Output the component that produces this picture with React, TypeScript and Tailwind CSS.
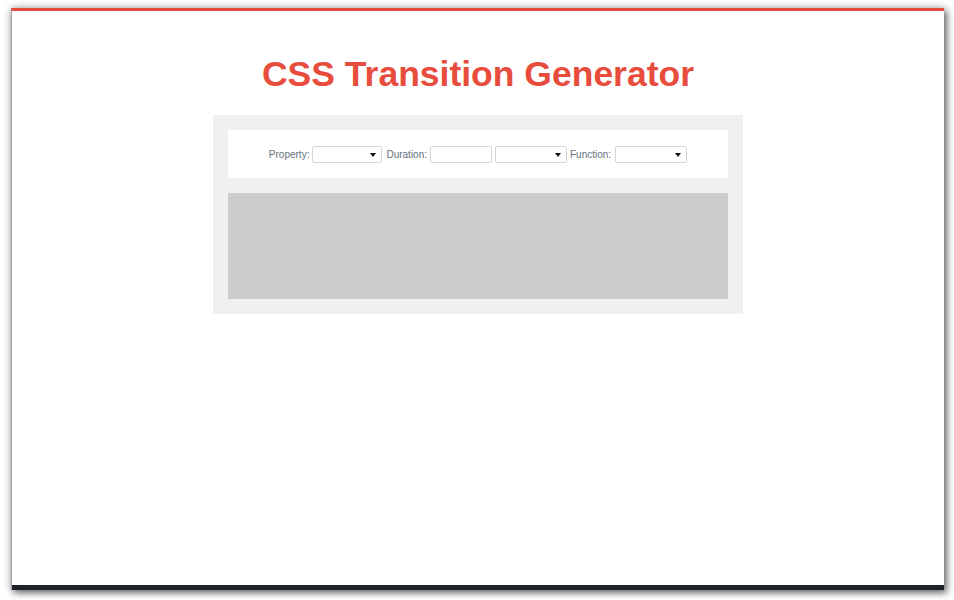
import { useState } from "react";

const labelClass = "translate-y-[1px] text-[10px] leading-none text-[#65717d]";

function Dropdown({ width, value, options, onChange }: { width: string; value: string; options: string[]; onChange: (v: string) => void }) {
  return (
    <div className={`relative h-[17px] ${width}`}>
      <select
        value={value}
        onChange={(e) => onChange(e.target.value)}
        className="block h-full w-full appearance-none rounded-[2px] border border-[#d6d6d6] bg-white px-1 text-[10px] leading-none text-[#333] outline-none"
      >
        {options.map((o) => (
          <option key={o} value={o}>
            {o}
          </option>
        ))}
      </select>
      <svg className="pointer-events-none absolute right-[6px] top-[7px]" width="6" height="4" viewBox="0 0 6 4">
        <path d="M0 0h6L3 4z" fill="#111" />
      </svg>
    </div>
  );
}

export default function App() {
  const [property, setProperty] = useState("");
  const [duration, setDuration] = useState("");
  const [unit, setUnit] = useState("");
  const [timing, setTiming] = useState("");

  return (
    <div className="min-h-[600px] bg-white pl-[11px] pt-[8px]" style={{ fontFamily: '"Liberation Sans", Arial, sans-serif' }}>
      <div className="flex h-[582px] w-[933px] flex-col border-l border-t-[3px] border-l-[#a0a0a0] border-t-[#e44b3b] bg-white shadow-[0_0_8px_rgba(0,0,0,0.3),3px_3px_7px_rgba(0,0,0,0.5)]">
        <main className="flex flex-1 flex-col items-center pt-[45px]">
          <h1 className="text-[35.5px] font-bold leading-[36px] text-[#e74c3c]">CSS Transition Generator</h1>

          <section className="mt-[23px] flex w-[530px] flex-col gap-[15px] bg-[#f0f0f0] p-[15px]">
            <div className="flex h-[48px] items-center justify-center bg-white">
              <span className={labelClass}>Property:</span>
              <div className="ml-[3px]">
                <Dropdown width="w-[70px]" value={property} onChange={setProperty} options={["", "all", "opacity", "width", "height", "color", "background-color", "transform"]} />
              </div>
              <span className={`ml-[4px] ${labelClass}`}>Duration:</span>
              <input
                value={duration}
                onChange={(e) => setDuration(e.target.value)}
                className="ml-[3px] block h-[17px] w-[62px] rounded-[2px] border border-[#d6d6d6] bg-white px-1 text-[10px] outline-none"
              />
              <div className="ml-[3px]">
                <Dropdown width="w-[72px]" value={unit} onChange={setUnit} options={["", "s", "ms"]} />
              </div>
              <span className={`ml-[3px] ${labelClass}`}>Function:</span>
              <div className="ml-[4px]">
                <Dropdown width="w-[72px]" value={timing} onChange={setTiming} options={["", "ease", "linear", "ease-in", "ease-out", "ease-in-out"]} />
              </div>
            </div>

            <div className="h-[106px] bg-[#cccccc]" />
          </section>
        </main>
        <footer className="h-[5px] bg-[#1e2329]" />
      </div>
    </div>
  );
}
